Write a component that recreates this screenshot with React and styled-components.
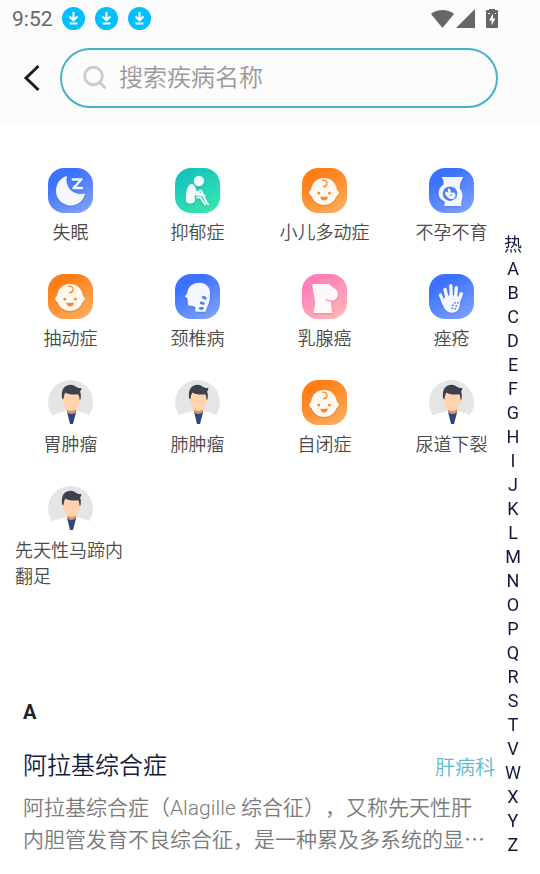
import React from "react";
import styled, { createGlobalStyle } from "styled-components";

const COLORS = {
  teal: "#46b3c4",
  dept: "#5cbccd",
  navy: "#101c3d",
  label: "#4a4a4a",
  gray: "#7a7a7a",
  status: "#666666",
};

const GRADIENTS = {
  blue: "linear-gradient(150deg, #3b72ff 25%, #86a5ff 100%)",
  green: "linear-gradient(150deg, #17c3bb 15%, #37e8ae 95%)",
  orange: "linear-gradient(150deg, #ff7d14 20%, #ffb265 100%)",
  pink: "linear-gradient(150deg, #ff7fb8 20%, #ffbdb5 100%)",
};

const HOT = [
  { name: "失眠", icon: "moon", tone: "blue" },
  { name: "抑郁症", icon: "sitting", tone: "green" },
  { name: "小儿多动症", icon: "baby", tone: "orange" },
  { name: "不孕不育", icon: "womb", tone: "blue" },
  { name: "抽动症", icon: "baby", tone: "orange" },
  { name: "颈椎病", icon: "neck", tone: "blue" },
  { name: "乳腺癌", icon: "breast", tone: "pink" },
  { name: "痤疮", icon: "hand", tone: "blue" },
  { name: "胃肿瘤" },
  { name: "肺肿瘤" },
  { name: "自闭症", icon: "baby", tone: "orange" },
  { name: "尿道下裂" },
  { name: "先天性马蹄内翻足" },
];

const LETTERS = ["热", ..."ABCDEFGHIJKLMNOPQRSTVWXYZ"];

const Glyph = ({ name }) => {
  switch (name) {
    case "moon":
      return (
        <>
          <path d="M19 8C16.500 18 24.500 28.500 37 25.500C36 32 30 37.500 23 37.500C14.500 37.500 8 31 8 23C8 15.500 12.500 9.500 19 8Z" />
          <path
            d="M24.800 11.500H33.500L25.500 20H34"
            fill="none"
            stroke="#fff"
            strokeWidth="2.500"
            strokeLinecap="round"
            strokeLinejoin="round"
          />
        </>
      );
    case "sitting":
      return (
        <>
          <circle cx="24" cy="13" r="5.200" />
          <path d="M15.500 16.300C18 15.600 20 17 20.500 19.500L21.500 23.500L29.500 26.600C31.500 27.500 30.700 29 29 28.700L21 27.500C19.500 27.500 19.500 29 20 31C20.500 34 18 35.500 15 35.500C12 35.500 10.500 34 10.800 30C11 25 12 17.500 15.500 16.300Z" />
          <path
            d="M22 24.500L26 22.500L31.500 34.500L33 36.500M22 29.500L25.500 29.500L30 36.500"
            fill="none"
            stroke="#fff"
            strokeWidth="2"
            strokeLinecap="round"
            strokeLinejoin="round"
          />
        </>
      );
    case "baby":
      return (
        <>
          <path d="M22 10C29 10 34 14.500 35 22C37.500 23 37.500 27 34.500 28C32.500 33.500 28 36.800 22 36.800C16 36.800 11.500 33.500 9.500 28C6.500 27 6.500 23 9 22C10 14.500 15 10 22 10Z" />
          <path
            d="M20 12.200C23.500 11.700 25.500 13.500 25 16C24.500 18 22.800 18.800 21 18.500"
            fill="none"
            stroke="#ff8a24"
            strokeWidth="1.300"
          />
          <g fill="#ff8a24">
            <circle cx="16.800" cy="25.200" r="1.400" />
            <circle cx="27.400" cy="25.200" r="1.400" />
            <path d="M18.300 28.700H26C25.800 31 24.300 32.400 22.100 32.400C19.900 32.400 18.500 31 18.300 28.700Z" />
          </g>
        </>
      );
    case "womb":
      return (
        <>
          <path d="M12.700 9H34.300C33 12 30.500 15 30.700 19C31 22 34 24 33.500 29C33.200 32 31.500 34 32.500 38H15C15.300 36 16.500 35 15.500 33.500C11 31.500 9.500 28 9.700 25C10 20.500 12 18.500 14.500 16.500C15 13.500 14 12 12.700 9Z" />
          <circle cx="21" cy="25.700" r="7.300" fill="#4d7dff" />
          <path d="M19.500 20.500C21.500 20.300 22 22.500 21.500 24.500L25 24.500C27 25.500 27 29 25 30.500C22 32 18.500 30 17 27.500C15.500 25.500 16 23 17.500 23.500L19.500 25C19 23.500 18.500 21.500 19.500 20.500Z" />
          <path d="M20.500 27.500L23 26.500" stroke="#4d7dff" strokeWidth="0.900" />
        </>
      );
    case "neck":
      return (
        <>
          <path d="M24.500 8.700C31 8.700 35 13 35 19C35 24 34.500 28 33 31C31.500 34 31.500 36 30.500 37.700H20.500C20 36.500 20.500 34 20 32.500C17 32 13.500 32 13 30.500C12.500 29 13 26.500 12.500 24.500C11.500 23.500 10 23.500 10 22.300C10.500 21 12.500 20 12.500 18C13 12.500 18 8.700 24.500 8.700Z" />
          <g
            fill="none"
            stroke="#4d7dff"
            strokeWidth="2.800"
            strokeLinecap="round"
          >
            <path d="M28.300 23.200L30.300 24.200" />
            <path d="M26.300 29L28.300 29.500" />
            <path d="M25.300 34.300H27.300" />
          </g>
        </>
      );
    case "breast":
      return (
        <>
          <path d="M10.300 10H27.300C29 13 36 15 36 19.500C36 23.500 33.500 26.500 29.500 27C28.500 31 30 35 30 39H11.300C11.500 35 13.500 32 13 28C12.500 22 10.300 16 10.300 10Z" />
          <path
            d="M24 25.500C26 26.800 28 27.200 30.500 26.800"
            fill="none"
            stroke="#ff8fb8"
            strokeWidth="1.200"
            strokeLinecap="round"
          />
        </>
      );
    case "hand":
      return (
        <>
          <g fill="none" stroke="#fff" strokeLinecap="round" strokeWidth="3.400">
            <path d="M11.500 21L14.500 29" />
            <path d="M16 15.500L18.500 26" />
            <path d="M21.800 11.800L22.500 25" />
            <path d="M27.300 13.800L26.500 25" />
            <path d="M32.300 19.800L29.300 28" />
          </g>
          <path d="M13 28C14 25 16.500 22.500 19 21.500H27.500C30 23.500 31.200 26 31 29C30.800 35 28 38.800 23 38.800C17.500 38.800 14.500 34.500 13 28Z" />
          <g fill="#4d7dff">
            <rect x="25" y="28" width="1.600" height="1.600" />
            <rect x="28" y="28" width="1.600" height="1.600" />
            <rect x="23" y="30.500" width="1.600" height="1.600" />
            <rect x="26.500" y="31" width="1.600" height="1.600" />
            <rect x="22.500" y="33.500" width="1.600" height="1.600" />
            <rect x="25.500" y="34" width="1.600" height="1.600" />
          </g>
        </>
      );
    default:
      return null;
  }
};

const Doctor = () => (
  <svg width="45" height="45" viewBox="0 0 45 45" aria-hidden="true">
    <circle cx="22.500" cy="22.500" r="22.500" fill="#e5e5e5" />
    <path d="M0 45V38L6 34.500C10 33 15 32 18.500 31H28.500C32 32 37 33 40 34.500L45 38V45Z" fill="#fff" />
    <path d="M19.200 28H28V33L23.600 35.500L19.200 33Z" fill="#d9965c" />
    <path d="M19 31.800C21 34.800 26 34.800 28.200 31.800L25 44H22Z" fill="#2c4682" />
    <path
      d="M15.200 17C15 13 18 9.500 23.500 9.500C29 9.500 32 13 31.800 17C33 18 32.500 21 31.500 21.500C31.300 26.500 28 31 23.500 31C19 31 15.700 26.500 15.500 21.500C14.500 21 14.200 18 15.200 17Z"
      fill="#ffd3ad"
    />
    <path
      d="M15.300 19.500L14 18C13 9 16 5 23 4.700C27 4.600 28 8.500 33.300 8C33.300 9.500 33 10.500 32 11.500C33 13.500 33 17 32.500 19.500L31.500 19.800C31.500 17 31 15.500 30 14.300C25 15 20 14.500 17.500 12.500C16 14.500 16 17 15.300 19.500Z"
      fill="#3c414d"
    />
  </svg>
);

const DownloadBadge = () => (
  <svg width="23" height="23" viewBox="0 0 23 23" aria-hidden="true">
    <circle cx="11.500" cy="11.500" r="11.500" fill="#00bfff" />
    <path
      d="M11.500 5V13M7.500 9.500L11.500 13.300L15.500 9.500M7.500 16.500H15.500"
      fill="none"
      stroke="#fff"
      strokeWidth="2"
    />
  </svg>
);

const HotItem = ({ name, icon, tone }) => (
  <HotButton>
    {icon ? (
      <Tile $tone={tone}>
        <TileGlyph viewBox="0 0 45 45" aria-hidden="true">
          <Glyph name={icon} />
        </TileGlyph>
      </Tile>
    ) : (
      <Doctor />
    )}
    <HotLabel>{name}</HotLabel>
  </HotButton>
);

const App = () => (
  <>
    <GlobalStyle />
    <Header>
      <StatusBar>
        <Clock>9:52</Clock>
        <Notices>
          <DownloadBadge />
          <DownloadBadge />
          <DownloadBadge />
        </Notices>
        <svg width="67" height="20" viewBox="0 0 67 20" aria-hidden="true">
          <g fill={COLORS.status}>
            <path d="M0 5C6 -0.500 17 -0.500 23 5L11.500 19Z" />
            <path d="M25 19L44 0V19Z" />
            <path d="M58 0H64V1H66Q67 1 67 2V18Q67 19 66 19H56Q55 19 55 18V2Q55 1 56 1H58Z" />
          </g>
          <path d="M62 4.500L58 11.500H60.500V16.500L64.500 9.500H62Z" fill="#fcfcfc" />
          <path d="M57 4H59V5H57ZM64 4H65V5H64Z" fill="#fcfcfc" />
        </svg>
      </StatusBar>
      <SearchRow>
        <BackButton aria-label="返回">
          <svg width="18" height="28" viewBox="0 0 18 28" aria-hidden="true">
            <path
              d="M15.500 2L3 14L15.500 26"
              fill="none"
              stroke="#1c1c1c"
              strokeWidth="3"
            />
          </svg>
        </BackButton>
        <SearchBox>
          <svg width="24" height="24" viewBox="0 0 24 24" aria-hidden="true">
            <g fill="none" stroke="#cccccc" strokeWidth="3">
              <circle cx="10.500" cy="10" r="8.800" />
              <path d="M16.500 16L22.500 22.500" />
            </g>
          </svg>
          <SearchInput
            type="text"
            placeholder="搜索疾病名称"
            aria-label="搜索疾病名称"
          />
        </SearchBox>
      </SearchRow>
    </Header>

    <main>
      <HotGrid>
        {HOT.map((item) => (
          <HotItem key={item.name} {...item} />
        ))}
      </HotGrid>

      <Section>
        <SectionLetter>A</SectionLetter>
        <Entry>
          <EntryHead>
            <EntryTitle>阿拉基综合症</EntryTitle>
            <Department>肝病科</Department>
          </EntryHead>
          <Summary>
            阿拉基综合症（Alagille
            综合征），又称先天性肝内胆管发育不良综合征，是一种累及多系统的显⋯
          </Summary>
        </Entry>
      </Section>
    </main>

    <LetterIndex>
      {LETTERS.map((letter) => (
        <LetterButton key={letter}>{letter}</LetterButton>
      ))}
    </LetterIndex>
  </>
);

const GlobalStyle = createGlobalStyle`
  * {
    box-sizing: border-box;
  }

  body {
    margin: 0;
    background: #fff;
    font-family: Roboto, "Noto Sans CJK SC", sans-serif;
    font-weight: 350;
    text-spacing-trim: space-all;
  }

  button, input {
    font: inherit;
    border: none;
    padding: 0;
    background: none;
  }

  svg {
    display: block;
    flex-shrink: 0;
  }
`;

const Header = styled.header`
  background: #fcfcfc;
  padding-bottom: 18px;
`;

const StatusBar = styled.div`
  display: flex;
  align-items: center;
  height: 37px;
  padding: 0 42px 0 12px;
  color: ${COLORS.status};
`;

const Clock = styled.span`
  font-size: 21px;
  font-weight: 400;
`;

const Notices = styled.div`
  display: flex;
  flex: 1;
  gap: 10px;
  margin-left: 9px;
`;

const SearchRow = styled.div`
  display: flex;
  align-items: center;
  padding: 11px 42px 0 23px;
`;

const BackButton = styled.button`
  width: 37px;
`;

const SearchBox = styled.div`
  display: flex;
  flex: 1;
  align-items: center;
  gap: 12px;
  height: 60px;
  padding: 0 21px;
  border: 2px solid ${COLORS.teal};
  border-radius: 30px;
`;

const SearchInput = styled.input`
  flex: 1;
  min-width: 0;
  font-size: 24px;
  outline: none;

  &::placeholder {
    color: #999;
    opacity: 1;
  }
`;

const HotGrid = styled.div`
  display: grid;
  grid-template-columns: repeat(4, 1fr);
  align-items: start;
  row-gap: 28px;
  padding: 42px 25px 0 7px;
`;

const HotButton = styled.button`
  display: flex;
  flex-direction: column;
  align-items: center;
  gap: 7px;
  padding: 0 8px;
`;

const Tile = styled.span`
  width: 45px;
  height: 45px;
  border-radius: 16px;
  background: ${(p) => GRADIENTS[p.$tone]};
`;

const TileGlyph = styled.svg`
  width: 45px;
  height: 45px;
  fill: #fff;
  opacity: 0.94;
  filter: drop-shadow(0 1px 1px rgba(0, 0, 0, 0.15));
`;

const HotLabel = styled.span`
  color: ${COLORS.label};
  font-size: 18px;
  line-height: 26px;
  text-align: left;
`;

const Section = styled.section`
  padding: 108px 45px 16px 23px;
`;

const SectionLetter = styled.h2`
  margin: 0;
  color: #222;
  font-size: 20px;
  line-height: 28px;
  font-weight: 700;
`;

const Entry = styled.article`
  padding-top: 22px;
`;

const EntryHead = styled.div`
  display: flex;
  align-items: center;
  justify-content: space-between;
`;

const EntryTitle = styled.h3`
  margin: 0;
  color: ${COLORS.navy};
  font-size: 24px;
  line-height: 36px;
  font-weight: inherit;
`;

const Department = styled.span`
  color: ${COLORS.dept};
  font-size: 20px;
`;

const Summary = styled.p`
  margin: 8px 0 0;
  padding-right: 4px;
  color: ${COLORS.gray};
  font-size: 21px;
  line-height: 32px;
`;

const LetterIndex = styled.nav`
  position: fixed;
  right: 0;
  bottom: 17px;
  display: flex;
  flex-direction: column;
  width: 54px;
`;

const LetterButton = styled.button`
  color: ${COLORS.navy};
  font-size: 18px;
  line-height: 24px;
  font-weight: 400;
`;

export default App;
